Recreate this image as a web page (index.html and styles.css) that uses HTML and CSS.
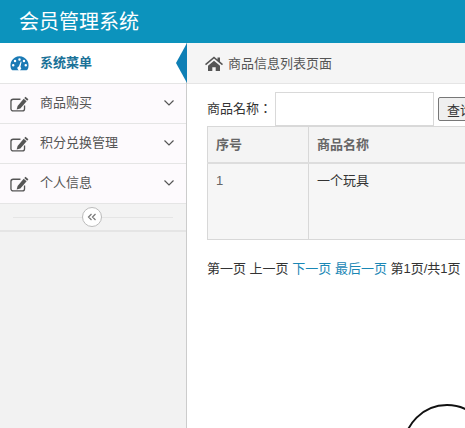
FILE: index.html
```html
<!DOCTYPE html>
<html lang="zh-CN">
<head>
<meta charset="utf-8">
<title>会员管理系统</title>
<link rel="stylesheet" href="styles.css">
</head>
<body>
<header class="topbar"><h1 class="brand">会员管理系统</h1></header>
<div class="shell">
  <aside class="sidebar">
    <ul class="menu">
      <li class="menu-item active">
        <svg class="icon" viewBox="0 0 20 16"><path fill="#1a7ab5" fill-rule="evenodd" d="M10 1a9.500 9.500 0 0 0-8.300 14.200c.2.300.5.500.9.500h14.800c.4 0 .7-.2.900-.5A9.500 9.500 0 0 0 10 1zM10 3a1.300 1.300 0 1 1 0 2.600A1.300 1.300 0 0 1 10 3zM5.300 4.700a1.300 1.300 0 1 1 0 2.600 1.300 1.300 0 0 1 0-2.600zM14.700 4.700a1.300 1.300 0 1 1 0 2.600 1.300 1.300 0 0 1 0-2.600zM3.400 9a1.300 1.300 0 1 1 0 2.600 1.300 1.300 0 0 1 0-2.600zM16.600 9a1.300 1.300 0 1 1 0 2.600 1.300 1.300 0 0 1 0-2.600zM11.300 6.500l.9.300-1.200 5.300a1.900 1.900 0 1 1-1.700-.4z"/></svg>
        <span class="label">系统菜单</span>
        <span class="pointer"></span>
      </li>
      <li class="menu-item">
        <svg class="icon" viewBox="0 0 20 16"><use href="#edit"/></svg>
        <span class="label">商品购买</span>
        <svg class="chev" viewBox="0 0 12 8"><path d="M1.500 1.500 6 6l4.500-4.500"/></svg>
      </li>
      <li class="menu-item">
        <svg class="icon" viewBox="0 0 20 16"><use href="#edit"/></svg>
        <span class="label">积分兑换管理</span>
        <svg class="chev" viewBox="0 0 12 8"><path d="M1.500 1.500 6 6l4.500-4.500"/></svg>
      </li>
      <li class="menu-item">
        <svg class="icon" viewBox="0 0 20 16"><use href="#edit"/></svg>
        <span class="label">个人信息</span>
        <svg class="chev" viewBox="0 0 12 8"><path d="M1.500 1.500 6 6l4.500-4.500"/></svg>
      </li>
    </ul>
    <div class="collapse">
      <span class="collapse-btn">
        <svg viewBox="0 0 10 8"><path d="M4.500 1 1.500 4l3 3M8.500 1l-3 3 3 3"/></svg>
      </span>
    </div>
  </aside>
  <main class="main">
    <div class="crumbs">
      <svg class="home" viewBox="0 0 18 15"><path fill="#555" d="M9 .5 0 8l1 1.200L9 2.500l8 6.700L18 8l-3-2.500V1.500h-2.500v1.900zM3 9.700V15h4.300v-3.800h3.400V15H15V9.700L9 4.700z"/></svg>
      <span>商品信息列表页面</span>
    </div>
    <div class="content">
      <form class="search">
        <label class="search-label" for="q" lang="zh-TW">商品名称：</label>
        <input class="search-input" id="q" type="text">
        <button class="search-btn" type="button">查询</button>
      </form>
      <table class="grid">
        <thead><tr><th class="col-id">序号</th><th class="col-name">商品名称</th></tr></thead>
        <tbody><tr><td>1</td><td class="dark">一个玩具</td></tr></tbody>
      </table>
      <p class="pager">第一页 上一页 <a href="#">下一页</a> <a href="#">最后一页</a> 第1页/共1页</p>
    </div>
    <span class="ring"></span>
  </main>
</div>
<svg class="defs" width="0" height="0"><defs>
  <g id="edit">
    <path fill="none" stroke="#555" stroke-width="1.400" d="M15.300 9.500V13a2.300 2.300 0 0 1-2.300 2.300H3.300A2.300 2.300 0 0 1 1 13V5.300A2.300 2.300 0 0 1 3.300 3H11"/>
    <path fill="#555" d="M16.300.3 19.400 3l-1.300 1.500-3.100-2.700zM14.400 2.500l3.100 2.700-6.600 7.500-3.900 1.200 1-3.900z"/>
  </g>
</defs></svg>
</body>
</html>
```
FILE: styles.css
```css
* { box-sizing: border-box; }
html, body { margin: 0; padding: 0; height: 100%; overflow: hidden; }
body {
  width: 465px;
  height: 428px;
  display: flex;
  flex-direction: column;
  background: #fff;
  font-family: "Liberation Sans", "Noto Sans CJK SC", sans-serif;
  font-size: 13px;
  color: #555;
}
.defs { position: absolute; }
.topbar {
  flex: 0 0 43px;
  background: #0c93bd;
  display: flex;
  align-items: center;
  padding-left: 19px;
}
.brand { margin: 0; font-size: 20px; font-weight: 400; color: #fff; line-height: 1; }
.shell { flex: 1; display: flex; min-height: 0; }
.sidebar {
  flex: 0 0 187px;
  background: #f2f2f2;
  border-right: 1px solid #ccc;
}
.menu { list-style: none; margin: 0; padding: 0; }
.menu-item {
  position: relative;
  height: 40px;
  display: flex;
  align-items: center;
  padding-left: 10px;
  background: #fdfafd;
  border-bottom: 1px solid #e5e5e5;
}
.menu-item.active { background: #fff; height: 41px; }
.active .label { color: #1a7298; font-weight: 700; }
.icon { width: 19px; height: 16px; flex: none; }
.label { margin-left: 11px; flex: 1; padding-bottom: 4px; }
.chev { width: 12px; height: 8px; margin: 0 11px 2px 0; fill: none; stroke: #555; stroke-width: 1.200; }
.pointer {
  position: absolute;
  right: -1px;
  top: 0;
  width: 11px;
  height: 40px;
  display: block;
  background: #0e7fb5;
  clip-path: polygon(100% 0, 100% 100%, 0 50%);
}
.collapse {
  height: 28px;
  display: flex;
  align-items: center;
  justify-content: center;
  background: #f3f3f3 linear-gradient(#e5e5e5, #e5e5e5) no-repeat center 13px / 160px 1px;
  border-bottom: 2px solid #e5e5e5;
}
.collapse-btn {
  width: 20px;
  height: 20px;
  margin: 0 2px 1px 0;
  border: 1px solid #bbb;
  border-radius: 50%;
  background: #fff;
  display: flex;
  align-items: center;
  justify-content: center;
}
.collapse-btn svg { width: 10px; height: 8px; fill: none; stroke: #777; stroke-width: 1.200; }
.main { position: relative; flex: 1; min-width: 0; overflow: hidden; }
.crumbs {
  height: 41px;
  background: #f5f5f5;
  border-bottom: 1px solid #e5e5e5;
  display: flex;
  align-items: center;
  gap: 5px;
  padding-left: 18px;
}
.home { width: 18px; height: 15px; flex: none; }
.crumbs span { padding-bottom: 1px; }
.content { padding: 8px 0 0 20px; width: 500px; }
.search { display: flex; align-items: center; height: 34px; color: #333; }
.search-label { width: 68px; flex: none; font-family: "Noto Sans CJK TC", sans-serif; line-height: 18px; padding-bottom: 2px; }
.search-input {
  width: 159px;
  height: 34px;
  border: 1px solid #d9d9d9;
  background: #fff;
  padding: 0;
  margin: 0;
  outline: none;
}
.search-btn {
  width: 60px;
  height: 24px;
  margin: 0 0 0 4px;
  padding: 0 0 0 8px;
  border: 1px solid #777;
  border-radius: 2px;
  background: #efefef;
  color: #333;
  font: inherit;
  text-align: left;
}
.grid {
  width: 500px;
  table-layout: fixed;
  border-collapse: collapse;
  background: #f6f6f6;
  border: 1px solid #ccc;
}
.grid th, .grid td { border: 1px solid #d8d8d8; padding: 0 8px; text-align: left; }
.grid th {
  height: 36px;
  padding-bottom: 2px;
  font-weight: 700;
  color: #666;
  background: #f4f4f4;
  border-bottom: 2px solid #ddd;
}
.grid td { height: 77px; vertical-align: top; padding-top: 8px; line-height: 18px; color: #666; }
.grid td.dark { color: #333; }
.col-id { width: 101px; }
.pager { margin: 19px 0 0; color: #333; line-height: 20px; }
.pager a { color: #1a87b5; text-decoration: none; }
.ring {
  position: absolute;
  left: 216px;
  top: 361px;
  width: 88px;
  height: 88px;
  border: 2px solid #111;
  border-radius: 50%;
}
```
